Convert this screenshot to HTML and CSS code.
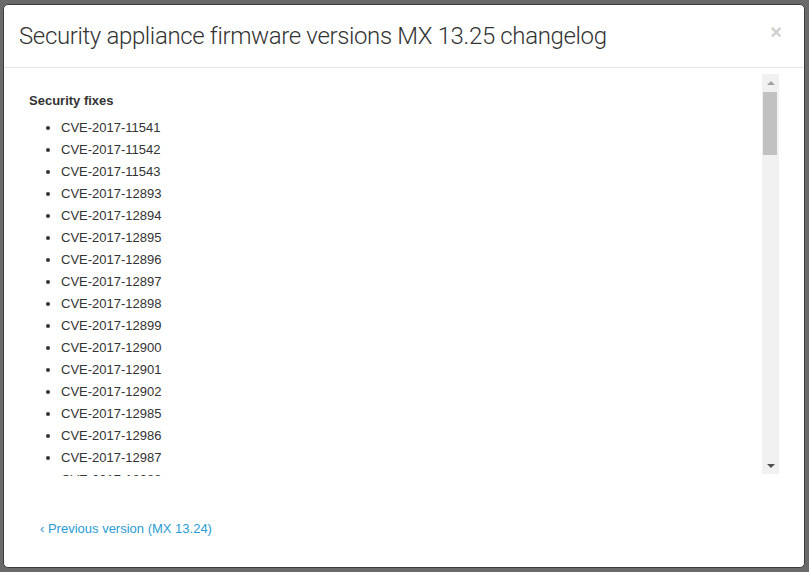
FILE: index.html
```html
<!DOCTYPE html>
<html>
<head>
<meta charset="utf-8">
<link rel="stylesheet" href="styles.css">
</head>
<body>
<div class="modal">
  <div class="modal-header">
    <h2 class="title">Security appliance firmware versions MX 13.25 changelog</h2>
    <span class="close">×</span>
  </div>
  <div class="modal-body">
    <div class="scroll-box">
      <div class="scroll-content">
        <h4 class="section">Security fixes</h4>
        <ul class="cve-list">
          <li>CVE-2017-11541</li>
          <li>CVE-2017-11542</li>
          <li>CVE-2017-11543</li>
          <li>CVE-2017-12893</li>
          <li>CVE-2017-12894</li>
          <li>CVE-2017-12895</li>
          <li>CVE-2017-12896</li>
          <li>CVE-2017-12897</li>
          <li>CVE-2017-12898</li>
          <li>CVE-2017-12899</li>
          <li>CVE-2017-12900</li>
          <li>CVE-2017-12901</li>
          <li>CVE-2017-12902</li>
          <li>CVE-2017-12985</li>
          <li>CVE-2017-12986</li>
          <li>CVE-2017-12987</li>
          <li>CVE-2017-12988</li>
        </ul>
      </div>
      <div class="scrollbar">
        <div class="sb-btn"><span class="arrow-up"></span></div>
        <div class="sb-track"><div class="sb-thumb"></div></div>
        <div class="sb-btn"><span class="arrow-down"></span></div>
      </div>
    </div>
  </div>
  <div class="modal-footer">
    <a class="prev-link" href="#">‹ Previous version (MX 13.24)</a>
  </div>
</div>
</body>
</html>
```
FILE: styles.css
```css
html, body {
  margin: 0;
  padding: 0;
  height: 100%;
}
body {
  background: #6a6a6a;
  font-family: "Liberation Sans", Arial, sans-serif;
  color: #333;
  overflow: hidden;
}
.modal {
  box-sizing: border-box;
  margin: 4px 4px 0 3px;
  height: 564px;
  background: #fff;
  border: 1px solid #3c3c3c;
  border-radius: 5px;
  display: flex;
  flex-direction: column;
}
.modal-header {
  position: relative;
  padding: 18px 15px 18px 15px;
  border-bottom: 1px solid #e5e5e5;
}
.title {
  margin: 0;
  font-family: Roboto, "Liberation Sans", sans-serif;
  font-weight: 300;
  font-size: 24px;
  letter-spacing: -0.36px;
  line-height: 26px;
  color: #333;
}
.close {
  position: absolute;
  right: 22px;
  top: 17px;
  font-size: 20px;
  font-weight: bold;
  line-height: 20px;
  color: #cfcfcf;
}
.modal-body {
  padding: 6px 25px 0 15px;
}
.scroll-box {
  display: flex;
  align-items: flex-start;
  height: 402px;
}
.scroll-content {
  flex: 1;
  height: 384px;
  overflow: hidden;
  padding: 18px 0 0 10px;
}
.section {
  margin: 0 0 7px;
  font-size: 13px;
  line-height: 18px;
  font-weight: bold;
  color: #333;
}
.cve-list {
  margin: 0;
  padding-left: 32px;
  list-style: disc;
  font-size: 13px;
  line-height: 22px;
}
.scrollbar {
  width: 17px;
  height: 400px;
  background: #f1f1f1;
  display: flex;
  flex-direction: column;
}
.sb-btn {
  height: 17px;
  display: flex;
  align-items: center;
  justify-content: center;
}
.arrow-up {
  width: 0;
  height: 0;
  border-left: 4px solid transparent;
  border-right: 4px solid transparent;
  border-bottom: 4px solid #a3a3a3;
}
.arrow-down {
  width: 0;
  height: 0;
  border-left: 4px solid transparent;
  border-right: 4px solid transparent;
  border-top: 4px solid #505050;
}
.sb-track {
  flex: 1;
  padding: 1px 2px 0 1px;
}
.sb-thumb {
  height: 63px;
  background: #c1c1c1;
}
.modal-footer {
  padding: 43px 0 0 36px;
}
.prev-link {
  font-size: 13px;
  line-height: 18px;
  color: #2a9bd5;
  text-decoration: none;
}
```
